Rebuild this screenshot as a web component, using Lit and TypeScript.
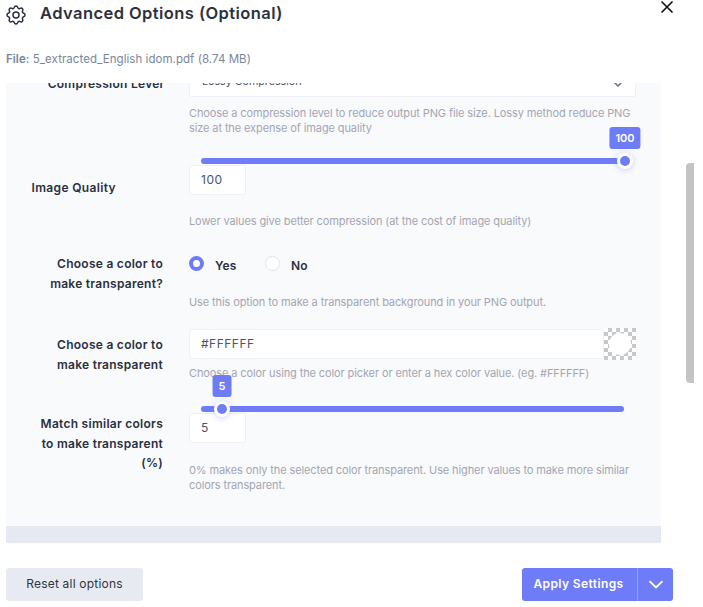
import { LitElement, html, css } from "lit";
import { customElement } from "lit/decorators.js";

@customElement("app-root")
export class AppRoot extends LitElement {
  static styles = css`
    :host {
      display: block;
      position: relative;
      width: 703px;
      height: 607px;
      overflow: hidden;
      background: #fff;
      font-family: Inter, "Noto Sans", sans-serif;
      color: #2a3040;
    }
    * { box-sizing: border-box; }
    .page { width: 674px; padding-left: 6px; }
    .head { display: flex; align-items: flex-start; height: 50px; }
    .gear { width: 24px; height: 24px; margin-top: 3px; margin-left: -2px; margin-right: 12px; color: #2a3040; }
    .title { font-size: 16.5px; font-weight: 600; line-height: 20px; margin-top: 3px; letter-spacing: 0.43px; flex: 1; color: #2b3140; }
    .close { width: 14px; height: 14px; color: #111; }
    .file { height: 33px; font-size: 11.5px; line-height: 18px; color: #7a869d; letter-spacing: 0.05px; }
    .file b { font-weight: 600; }
    .panel { width: 655px; height: 460px; background: #f9fafc; overflow: hidden; display: flex; flex-direction: column; }
    .scroll { flex: 1; overflow: hidden; }
    .band { height: 17px; background: #e6e9f2; }
    .row { display: grid; grid-template-columns: 157px 447px; column-gap: 26px; }
    .label { text-align: right; font-size: 12px; font-weight: 600; line-height: 19.5px; color: #2a3040; letter-spacing: 0.27px; }
    .help { font-size: 11px; line-height: 15px; color: #a3a6b2; letter-spacing: -0.11px; white-space: nowrap; }
    .input {
      display: block; height: 30px; background: #fff; border: 1px solid #eef0f5; border-radius: 3px;
      font: 12px Inter, sans-serif; color: #4d5463; padding: 0 11px 2px; outline: none; letter-spacing: 0.5px;
    }
    .num { width: 57px; }
    .select { width: 447px; height: 32px; margin-top: -18px; display: flex; justify-content: space-between; align-items: center; font-size: 10.7px; color: #4d5463; background: #fff; border: 1px solid #eef0f5; border-radius: 3px; padding: 0 12px; }
    .select svg { width: 10px; height: 6px; color: #6a7388; margin-top: 6px; }
    .r1 .label { margin-top: -9px; white-space: nowrap; }
    .r1 .help { margin-top: 9px; }
    .r2 { margin-top: 22px; }
    .r2 .label { margin-top: 20px; padding-right: 47px; letter-spacing: 0.35px; }
    .r2 .help { margin-top: 19px; }
    .slider { position: relative; height: 6px; margin-left: 12px; background: #6f7cf7; border-radius: 3px; margin-bottom: 1px; }
    .r2 .slider { width: 424px; }
    .r5 .slider { width: 423px; }
    .thumb {
      position: absolute; top: 50%; width: 16px; height: 16px; margin: -8px 0 0 -8px; border-radius: 50%;
      background: #6f7cf7; border: 3px solid #fff; box-shadow: 0 1px 6px rgba(111,124,247,.35);
    }
    .bubble {
      position: absolute; bottom: 17px; height: 22px; line-height: 22px; padding: 0 6px; transform: translateX(-50%);
      background: #6f7cf7; color: #fff; border-radius: 3px; font-size: 11px; font-weight: 600; text-align: center; min-width: 18px;
    }
    .r3 { margin-top: 22px; }
    .r3 .label { margin-top: 3px; }
    .radios { display: flex; align-items: center; height: 19px; margin-top: 3px; font-size: 12px; font-weight: 600; color: #2a3040; letter-spacing: .2px; }
    .radio { width: 15px; height: 15px; border-radius: 50%; background: #fff; border: 1px solid #e3e5ec; }
    .radio.on { border: 4px solid #6f7cf7; }
    .yes { margin-left: 11px; width: 50px; margin-top: 3px; }
    .no { margin-left: 11px; margin-top: 3px; }
    .r3 .help { margin-top: 22px; }
    .r4 { margin-top: 18px; }
    .r4 .label { margin-top: 7px; }
    .color { display: flex; align-items: center; }
    .color .input { width: 416px; }
    .swatch {
      width: 32px; height: 32px; position: relative; flex: none;
      background: conic-gradient(#c8c8c8 25%, #fff 0 50%, #c8c8c8 0 75%, #fff 0) 0 0 / 8px 8px;
    }
    .swatch::after { content: ""; position: absolute; inset: 5px; border-radius: 50%; background: #fff; }
    .r4 .help { margin-top: 6px; }
    .r5 { margin-top: 25px; }
    .r5 .label { margin-top: 8px; }
    .r5 .help { margin-top: 20px; }
    .foot { display: flex; justify-content: space-between; margin-top: 25px; width: 667px; }
    .btn { height: 33px; border-radius: 3px; font-size: 12px; display: flex; align-items: center; padding-bottom: 1px; }
    .reset { width: 137px; justify-content: center; background: #e8eaf2; color: #2f3542; letter-spacing: .2px; padding-bottom: 2px; }
    .apply { width: 151px; background: #6f7cf7; color: #fff; font-weight: 600; letter-spacing: .4px; padding-bottom: 0; }
    .apply span { width: 113px; text-align: center; margin-right: 2px; padding-bottom: 2px; }
    .apply i { width: 36px; height: 100%; border-left: 1px solid #95a0fa; display: flex; align-items: center; justify-content: center; }
    .apply svg { width: 16px; height: 9px; }
    .bar { position: absolute; left: 686px; top: 163px; width: 8px; height: 220px; background: #c4c4c4; border-radius: 4px 0 0 4px; }
  `;

  render() {
    return html`
      <div class="page">
        <div class="head">
          <svg class="gear" viewBox="0 0 24 24" fill="none" stroke="currentColor" stroke-width="1.5" stroke-linecap="round" stroke-linejoin="round">
            <path d="M10.325 4.317c.426 -1.756 2.924 -1.756 3.35 0a1.724 1.724 0 0 0 2.573 1.066c1.543 -.94 3.31 .826 2.37 2.37a1.724 1.724 0 0 0 1.065 2.572c1.756 .426 1.756 2.924 0 3.35a1.724 1.724 0 0 0 -1.066 2.573c.94 1.543 -.826 3.31 -2.37 2.37a1.724 1.724 0 0 0 -2.572 1.065c-.426 1.756 -2.924 1.756 -3.35 0a1.724 1.724 0 0 0 -2.573 -1.066c-1.543 .94 -3.31 -.826 -2.37 -2.37a1.724 1.724 0 0 0 -1.065 -2.572c-1.756 -.426 -1.756 -2.924 0 -3.35a1.724 1.724 0 0 0 1.066 -2.573c-.94 -1.543 .826 -3.31 2.37 -2.37c1 .608 2.296 .07 2.572 -1.065z"/>
            <circle cx="12" cy="12" r="3"/>
          </svg>
          <div class="title">Advanced Options (Optional)</div>
          <svg class="close" viewBox="0 0 14 14" fill="none" stroke="currentColor" stroke-width="1.6"><path d="M1.5 1.5l11 11M12.5 1.5l-11 11"/></svg>
        </div>
        <div class="file"><b>File:</b> 5_extracted_English idom.pdf (8.74 MB)</div>
        <div class="panel">
          <div class="scroll">
            <div class="row r1">
              <div class="label">Compression Level</div>
              <div>
                <div class="select"><span>Lossy Compression</span>
                  <svg viewBox="0 0 10 6" fill="none" stroke="currentColor" stroke-width="1.5"><path d="M1 1l4 4 4-4"/></svg>
                </div>
                <div class="help">Choose a compression level to reduce output PNG file size. Lossy method reduce PNG<br>size at the expense of image quality</div>
              </div>
            </div>
            <div class="row r2">
              <div class="label">Image Quality</div>
              <div>
                <div class="slider"><div class="thumb" style="left:100%"><div class="bubble" style="left:5px">100</div></div></div>
                <input class="input num" value="100" />
                <div class="help">Lower values give better compression (at the cost of image quality)</div>
              </div>
            </div>
            <div class="row r3">
              <div class="label">Choose a color to<br>make transparent?</div>
              <div>
                <div class="radios">
                  <div class="radio on"></div><div class="yes">Yes</div>
                  <div class="radio"></div><div class="no">No</div>
                </div>
                <div class="help">Use this option to make a transparent background in your PNG output.</div>
              </div>
            </div>
            <div class="row r4">
              <div class="label">Choose a color to<br>make transparent</div>
              <div>
                <div class="color"><input class="input" value="#FFFFFF" /><div class="swatch"></div></div>
                <div class="help">Choose a color using the color picker or enter a hex color value. (eg. #FFFFFF)</div>
              </div>
            </div>
            <div class="row r5">
              <div class="label">Match similar colors<br>to make transparent<br>(%)</div>
              <div>
                <div class="slider"><div class="thumb" style="left:21px"><div class="bubble" style="left:5px">5</div></div></div>
                <input class="input num" value="5" />
                <div class="help">0% makes only the selected color transparent. Use higher values to make more similar<br>colors transparent.</div>
              </div>
            </div>
          </div>
          <div class="band"></div>
        </div>
        <div class="foot">
          <div class="btn reset">Reset all options</div>
          <div class="btn apply"><span>Apply Settings</span><i><svg viewBox="0 0 16 9" fill="none" stroke="currentColor" stroke-width="1.8"><path d="M1.5 1.2L8 7.5l6.5-6.3"/></svg></i></div>
        </div>
      </div>
      <div class="bar"></div>
    `;
  }
}
